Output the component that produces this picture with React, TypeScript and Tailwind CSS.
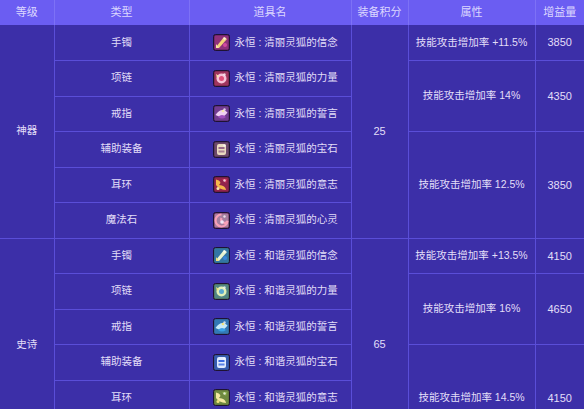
import React from "react";

type Tier = "art" | "epic";

function ItemIcon({ tier, idx }: { tier: Tier; idx: number }) {
  const art = tier === "art";
  const bg = art ? ["#5a1c5e", "#6a2048", "#4d2a6a", "#4a2f52", "#5e1a3e", "#6a2a5a"][idx] : ["#2f6a7a", "#4a6a48", "#2f5a8a", "#34508a", "#5a6a3a", "#2f6a6a"][idx];
  const c1 = art ? ["#f2d27a", "#f7c2d8", "#f0d0f4", "#eadcc0", "#f5b84a", "#f7a0b8"][idx] : ["#e8f4d0", "#e0f0b8", "#c8ecf8", "#e0ecff", "#f4e8a0", "#d0f4e8"][idx];
  const c2 = art ? ["#d04aa0", "#e0507a", "#a050c0", "#9a6a8a", "#d0305e", "#f0e4f4"][idx] : ["#3a86d8", "#5aa8d0", "#3aa0e8", "#3a6ae0", "#8ab04a", "#3ab0c8"][idx];
  const c3 = art ? "#f6e6a8" : "#f2e27a";
  return (
    <svg width="17" height="17" viewBox="0 0 17 17" className="shrink-0">
      <rect x="0.5" y="0.5" width="16" height="16" rx="2" fill={bg} stroke="#1e1232" />
      <rect x="1.5" y="1.5" width="14" height="14" rx="1.5" fill={c2} opacity="0.45" />
      {idx === 0 && (
        <>
          <path d="M3 13 L11 3 L14 5 L6 14 Z" fill={c1} />
          <path d="M3 10 L6 14 L3 14 Z" fill={c3} />
          <circle cx="12" cy="11" r="2" fill={c2} />
        </>
      )}
      {idx === 1 && (
        <>
          <circle cx="8.5" cy="8.5" r="5" fill={c1} />
          <circle cx="8.5" cy="8.5" r="2.5" fill={c2} />
          <path d="M3 4 L6 6 L4 8 Z" fill={c3} />
        </>
      )}
      {idx === 2 && (
        <>
          <path d="M2.5 10 Q8.5 1.5 14.5 7.5 Q10 14.5 2.5 10 Z" fill={c1} />
          <path d="M5 12 Q9 8 13 12 Q9 15 5 12 Z" fill={c2} />
          <circle cx="10" cy="6" r="1.3" fill={c3} />
        </>
      )}
      {idx === 3 && (
        <>
          <rect x="4" y="3" width="9" height="11" rx="2" fill={c1} />
          <rect x="5.5" y="6" width="6" height="2" fill={c2} />
          <rect x="5.5" y="9.5" width="6" height="2" fill={c2} opacity="0.8" />
        </>
      )}
      {idx === 4 && (
        <>
          <path d="M3 3.5 Q10 5.5 6 9 Q12.5 9.5 13 14 Q6 13.5 3 9 Z" fill={c1} />
          <path d="M9 3 L14 3 L13 7 Z" fill={c2} />
          <circle cx="5" cy="12.5" r="1.5" fill={c3} />
        </>
      )}
      {idx === 5 && (
        <>
          <path d="M8.5 2.5 A6 6 0 1 0 14.5 9 A3 3 0 1 1 8.5 6" stroke={c1} strokeWidth="2.2" fill="none" />
          <circle cx="9" cy="10" r="1.8" fill={c2} />
        </>
      )}
      <circle cx="11.5" cy="4.5" r="1.2" fill="#ffffff" opacity="0.75" />
    </svg>
  );
}

const types = ["手镯", "项链", "戒指", "辅助装备", "耳环", "魔法石"];
const suffix = ["信念", "力量", "誓言", "宝石", "意志", "心灵"];

const cellBase = "border-r border-b border-[#5a4ed8] text-center align-middle text-[10.5px] text-[#e2def8] font-normal";
const cellLast = "border-b border-[#5a4ed8] text-center align-middle text-[10.5px] text-[#e2def8] font-normal";

function Group({ tier, label, prefix, score, attrs }: { tier: Tier; label: string; prefix: string; score: string; attrs: string[][] }) {
  return (
    <>
      {types.map((t, i) => (
        <tr key={t} className="h-[35.5px]">
          {i === 0 && (
            <td rowSpan={6} className={cellBase}>
              {label}
            </td>
          )}
          <td className={cellBase}>{t}</td>
          <td className={cellBase + " text-left"}>
            <div className="flex items-center gap-[5px] pl-[23px]">
              <ItemIcon tier={tier} idx={i} />
              <span className="whitespace-nowrap">{`永恒 : ${prefix}灵狐的${suffix[i]}`}</span>
            </div>
          </td>
          {i === 0 && (
            <td rowSpan={6} className={cellBase + " text-[11px]"}>
              {score}
            </td>
          )}
          {i === 0 && <td className={cellBase}>{attrs[0][0]}</td>}
          {i === 0 && <td className={cellLast + " text-[11px]"}>{attrs[0][1]}</td>}
          {i === 1 && (
            <td rowSpan={2} className={cellBase}>
              {attrs[1][0]}
            </td>
          )}
          {i === 1 && (
            <td rowSpan={2} className={cellLast + " text-[11px]"}>
              {attrs[1][1]}
            </td>
          )}
          {i === 3 && (
            <td rowSpan={3} className={cellBase}>
              {attrs[2][0]}
            </td>
          )}
          {i === 3 && (
            <td rowSpan={3} className={cellLast + " text-[11px]"}>
              {attrs[2][1]}
            </td>
          )}
        </tr>
      ))}
    </>
  );
}

export default function App() {
  const head = "h-[25px] bg-[#6b5df2] text-[#dcd7ff] text-[11px] font-normal text-center align-middle border-r border-[#7d71f6]";
  const headLast = "h-[25px] bg-[#6b5df2] text-[#dcd7ff] text-[11px] font-normal text-center align-middle";
  return (
    <div
      className="w-[584px] h-[409px] overflow-hidden bg-[#3c2fa8]"
      style={{ fontFamily: '"Liberation Sans", "Noto Sans CJK SC", sans-serif' }}
    >
      <table className="table-fixed border-collapse w-[584px]">
        <colgroup>
          <col className="w-[54px]" />
          <col className="w-[135px]" />
          <col className="w-[162px]" />
          <col className="w-[57px]" />
          <col className="w-[127px]" />
          <col className="w-[49px]" />
        </colgroup>
        <thead>
          <tr>
            <th className={head}>等级</th>
            <th className={head}>类型</th>
            <th className={head}>道具名</th>
            <th className={head}>装备积分</th>
            <th className={head}>属性</th>
            <th className={headLast}>增益量</th>
          </tr>
        </thead>
        <tbody>
          <Group
            tier="art"
            label="神器"
            prefix="清丽"
            score="25"
            attrs={[
              ["技能攻击增加率 +11.5%", "3850"],
              ["技能攻击增加率 14%", "4350"],
              ["技能攻击增加率 12.5%", "3850"],
            ]}
          />
          <Group
            tier="epic"
            label="史诗"
            prefix="和谐"
            score="65"
            attrs={[
              ["技能攻击增加率 +13.5%", "4150"],
              ["技能攻击增加率 16%", "4650"],
              ["技能攻击增加率 14.5%", "4150"],
            ]}
          />
        </tbody>
      </table>
    </div>
  );
}
